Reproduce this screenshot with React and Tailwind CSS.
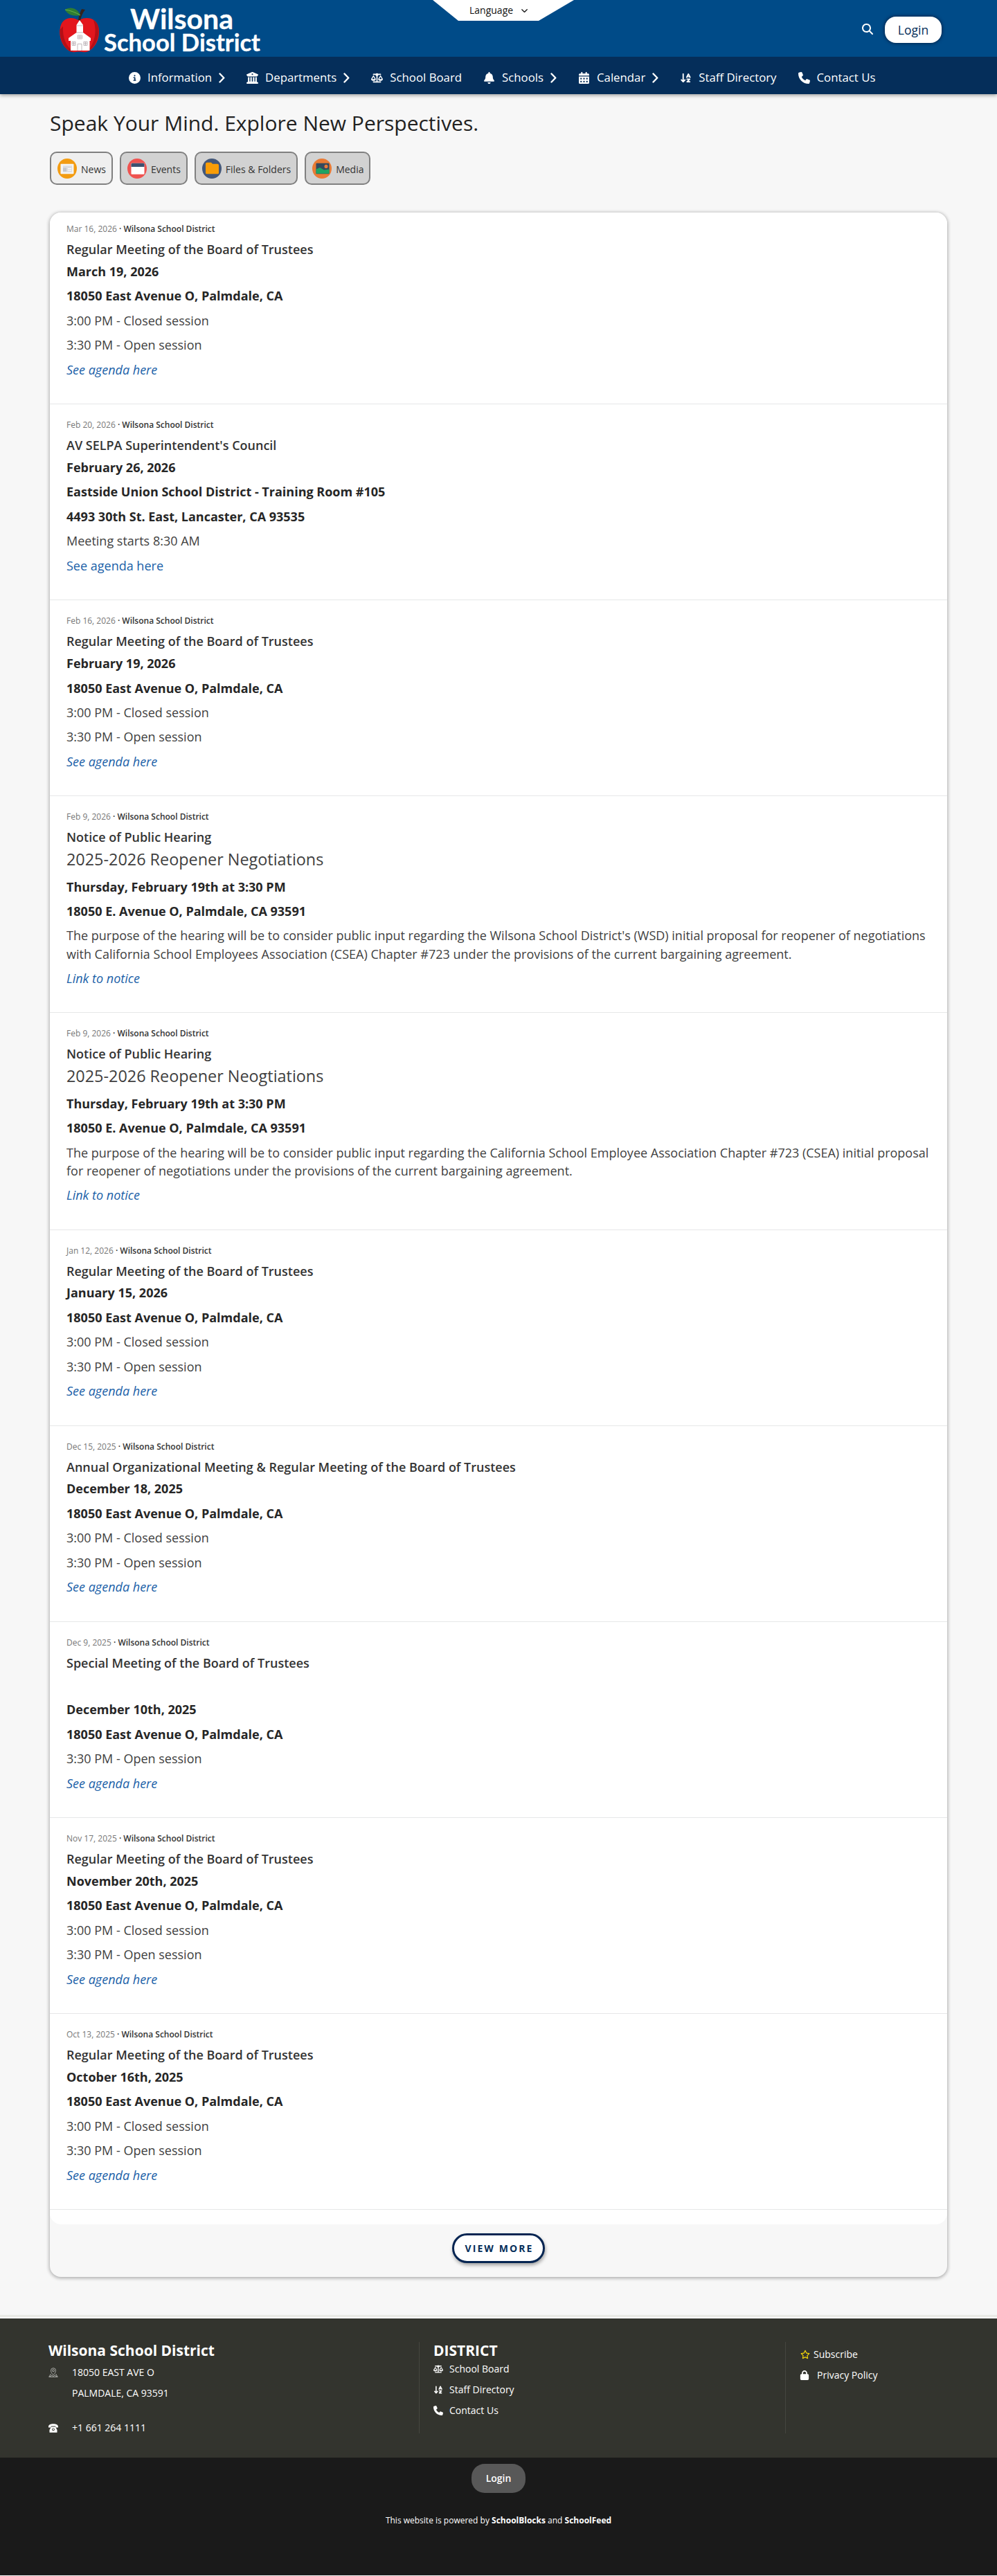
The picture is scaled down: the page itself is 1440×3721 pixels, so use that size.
import React from 'react';
import {
  FaArrowDownAZ,
  FaBell,
  FaBuildingColumns,
  FaCalendarDays,
  FaChevronDown,
  FaCircleInfo,
  FaLock,
  FaMagnifyingGlass,
  FaPhone,
  FaRegStar,
  FaScaleBalanced,
} from 'react-icons/fa6';

const navItems = [
  { label: 'Information', icon: FaCircleInfo, menu: true },
  { label: 'Departments', icon: FaBuildingColumns, menu: true },
  { label: 'School Board', icon: FaScaleBalanced },
  { label: 'Schools', icon: FaBell, menu: true },
  { label: 'Calendar', icon: FaCalendarDays, menu: true },
  { label: 'Staff Directory', icon: FaArrowDownAZ },
  { label: 'Contact Us', icon: FaPhone },
];

const address = { text: '18050 East Avenue O, Palmdale, CA', bold: true };
const closed = { text: '3:00 PM - Closed session' };
const open = { text: '3:30 PM - Open session' };
const agenda = { text: 'See agenda here', link: true, italic: true };

const posts = [
  {
    date: 'Mar 16, 2026',
    title: 'Regular Meeting of the Board of Trustees',
    lines: [{ text: 'March 19, 2026', bold: true }, address, closed, open, agenda],
  },
  {
    date: 'Feb 20, 2026',
    title: "AV SELPA Superintendent's Council",
    lines: [
      { text: 'February 26, 2026', bold: true },
      { text: 'Eastside Union School District - Training Room #105', bold: true },
      { text: '4493 30th St. East, Lancaster, CA 93535', bold: true },
      { text: 'Meeting starts 8:30 AM' },
      { text: 'See agenda here', link: true },
    ],
  },
  {
    date: 'Feb 16, 2026',
    title: 'Regular Meeting of the Board of Trustees',
    lines: [{ text: 'February 19, 2026', bold: true }, address, closed, open, agenda],
  },
  {
    date: 'Feb 9, 2026',
    title: 'Notice of Public Hearing',
    heading: '2025-2026 Reopener Negotiations',
    lines: [
      { text: 'Thursday, February 19th at 3:30 PM', bold: true },
      { text: '18050 E. Avenue O, Palmdale, CA 93591', bold: true },
      {
        text: "The purpose of the hearing will be to consider public input regarding the Wilsona School District's (WSD) initial proposal for reopener of negotiations with California School Employees Association (CSEA) Chapter #723 under the provisions of the current bargaining agreement.",
      },
      { text: 'Link to notice', link: true, italic: true },
    ],
  },
  {
    date: 'Feb 9, 2026',
    title: 'Notice of Public Hearing',
    heading: '2025-2026 Reopener Neogtiations',
    lines: [
      { text: 'Thursday, February 19th at 3:30 PM', bold: true },
      { text: '18050 E. Avenue O, Palmdale, CA 93591', bold: true },
      {
        text: 'The purpose of the hearing will be to consider public input regarding the California School Employee Association Chapter #723 (CSEA) initial proposal for reopener of negotiations under the provisions of the current bargaining agreement.',
      },
      { text: 'Link to notice', link: true, italic: true },
    ],
  },
  {
    date: 'Jan 12, 2026',
    title: 'Regular Meeting of the Board of Trustees',
    lines: [{ text: 'January 15, 2026', bold: true }, address, closed, open, agenda],
  },
  {
    date: 'Dec 15, 2025',
    title: 'Annual Organizational Meeting & Regular Meeting of the Board of Trustees',
    lines: [{ text: 'December 18, 2025', bold: true }, address, closed, open, agenda],
  },
  {
    date: 'Dec 9, 2025',
    title: 'Special Meeting of the Board of Trustees',
    lines: [{ text: '\u00a0' }, { text: 'December 10th, 2025', bold: true }, address, open, agenda],
  },
  {
    date: 'Nov 17, 2025',
    title: 'Regular Meeting of the Board of Trustees',
    lines: [{ text: 'November 20th, 2025', bold: true }, address, closed, open, agenda],
  },
  {
    date: 'Oct 13, 2025',
    title: 'Regular Meeting of the Board of Trustees',
    lines: [{ text: 'October 16th, 2025', bold: true }, address, closed, open, agenda],
  },
];

const Logo = () => (
  <svg width="300" height="75" viewBox="0 0 300 75" className="block overflow-visible">
    {/* apple */}
    <path d="M28 24 C18 18 3 20 1.500 38 C0 54 9 66 17 69.500 C22 71.500 25 69 30 69.500 C35 70 38 71 43 69 C52 64 59 52 58 38 C56 20 40 19 31 23 Z" fill="#e3161d" />
    <path d="M50 24 C57 28 60 38 56 50 C53 60 47 67 42 69 C51 57 56 42 50 24 Z" fill="#b50f16" />
    <path d="M1.500 38 C1 53 9 66 17 69.500 L21 69 C11 63 5 50 6 33 Z" fill="#b50f16" />
    <path d="M28 24 C29 17 31 12 33 8 L38 9 C34 14 32 19 31 25 Z" fill="#35231c" />
    <path d="M9 9 C17 4 27 7 31 17 C22 19 13 17 9 9 Z" fill="#2f7d32" />
    <path d="M9 9 C17 10 24 13 31 17" stroke="#69b34c" strokeWidth="1" fill="none" />
    {/* school house */}
    <path d="M30 24 L35 31 V42 L46 50 V54 H44.500 V68 H17 V54 H14 V50 L25.500 42 V31 Z" fill="#fff" />
    <g fill="none" stroke="#a79ba1" strokeWidth="0.700">
      <path d="M25 32 H35 M25 42 H35" />
      <rect x="27.500" y="46" width="6" height="5" />
      <path d="M27.500 48.500 H33.500 M30.500 46 V51" />
      <rect x="19" y="55.500" width="5" height="5" />
      <path d="M19 58 H24 M21.500 55.500 V60.500" />
      <rect x="36" y="55.500" width="5" height="5" />
      <path d="M36 58 H41 M38.500 55.500 V60.500" />
      <path d="M27 68 V58.500 H33 V68" />
    </g>
    <g fill="#fff" stroke="#fff" strokeWidth="0.300" fontFamily="Lato, sans-serif" fontWeight="700">
      <text x="103" y="37" fontSize="41" textLength="149" lengthAdjust="spacingAndGlyphs">Wilsona</text>
      <text x="65" y="68.500" fontSize="34" textLength="226" lengthAdjust="spacingAndGlyphs">School District</text>
    </g>
  </svg>
);

const tabs = [
  {
    label: 'News',
    active: true,
    icon: (
      <>
        <circle cx="14" cy="14" r="14" fill="#f39c12" />
        <rect x="4.500" y="7.500" width="19" height="14" rx="1" fill="#f4f4f4" />
        <rect x="8" y="10" width="13" height="9" fill="#dcdde0" />
        <rect x="8" y="13" width="5" height="5" fill="#c3c6cb" />
        <path d="M15 14 H20 M15 16.500 H20" stroke="#fff" />
      </>
    ),
  },
  {
    label: 'Events',
    icon: (
      <>
        <circle cx="14" cy="14" r="14" fill="#ef5350" />
        <rect x="5.500" y="6.500" width="19" height="15.500" rx="1" fill="#fff" />
        <path d="M5.500 11.500 V8 a1.500 1.500 0 0 1 1.500-1.500 H23 a1.500 1.500 0 0 1 1.500 1.500 V11.500 Z" fill="#3d5170" />
      </>
    ),
  },
  {
    label: 'Files & Folders',
    icon: (
      <>
        <circle cx="14" cy="14" r="14" fill="#44587a" />
        <path d="M5 7.500 a2 2 0 0 1 2-2 H13 L15 7.500 H22 a2 2 0 0 1 2 2 V20 a1.500 1.500 0 0 1-1.500 1.500 H6.500 A1.500 1.500 0 0 1 5 20 Z" fill="#f99d07" />
      </>
    ),
  },
  {
    label: 'Media',
    icon: (
      <>
        <circle cx="14" cy="14" r="14" fill="#e97b35" />
        <rect x="5.500" y="6.500" width="19" height="15" rx="1" fill="#34495e" />
        <circle cx="20" cy="11" r="2.500" fill="#e97b35" />
        <path d="M5.500 15 L11 12.500 L17 16 L24.500 15 V21 H5.500 Z" fill="#1fa463" />
      </>
    ),
  },
];

const NavChevron = () => (
  <svg width="9" height="15" viewBox="0 0 9 15" fill="none" stroke="currentColor" strokeWidth="2.400" className="ml-[10px]">
    <path d="M1.500 1.500 L7.300 7.500 L1.500 13.500" strokeLinecap="round" strokeLinejoin="round" />
  </svg>
);

const PinIcon = () => (
  <svg width="14" height="14" viewBox="0 0 14 14" fill="none" stroke="#a9aaa6" strokeWidth="1">
    <path d="M7 10.500 C4.500 8 3.500 6.500 3.500 4.200 a3.500 3.500 0 0 1 7 0 C10.500 6.500 9.500 8 7 10.500 Z" />
    <circle cx="7" cy="4.300" r="1.500" />
    <path d="M3.500 9 L0.700 13.400 H13.300 L10.500 9" />
    <path d="M2 13 L5 11 L7 12.500 L9 11 L12 13" />
  </svg>
);

const DeskPhoneIcon = () => (
  <svg width="14" height="13" viewBox="0 0 14 13" fill="#fff">
    <path d="M0 4.500 C0 1.500 3 0.200 7 0.200 S14 1.500 14 4.500 V5.400 H10.300 V3.600 H3.700 V5.400 H0 Z" />
    <path fillRule="evenodd" d="M4 4.500 H10 L12.500 9 V12.800 H1.500 V9 Z M7 6.400 a1.900 1.900 0 1 0 0 3.800 a1.900 1.900 0 0 0 0-3.800 Z" />
    <circle cx="7" cy="8.300" r="1" />
  </svg>
);

const Header = () => (
  <header className="relative z-10 shadow-[0_2px_5px_rgba(0,0,0,0.35)]">
    <div className="relative flex h-[82px] items-start justify-between bg-[#004b88] pr-20 pl-[85px]">
      <div className="pt-[5px]">
        <Logo />
      </div>
      <div className="absolute top-0 left-1/2 ml-[-95px] flex h-[30px] w-[204px] items-center bg-white pl-[53px] text-sm text-[#111] [clip-path:polygon(0_0,100%_0,153px_100%,37px_100%)]">
        Language
        <FaChevronDown className="ml-[11px] h-[10px] w-[11px]" />
      </div>
      <div className="flex items-center pt-6">
        <FaMagnifyingGlass className="mr-[17px] mb-0.5 size-4 text-white" />
        <button className="h-[38px] w-[82px] rounded-2xl bg-white text-[17.500px] font-medium text-[#062e59] shadow-[0_0_4px_1px_rgba(3,30,62,0.800)]">
          Login
        </button>
      </div>
    </div>
    <nav className="flex h-[54px] items-center bg-[#052e5a] pt-1.5 pl-[186px] text-[16.800px] text-white">
      {navItems.map(({ label, icon: Icon, menu }) => (
        <a key={label} className="mr-[31px] flex items-center whitespace-nowrap">
          <Icon className="mr-[10px] h-[17px] w-auto" />
          {label}
          {menu && <NavChevron />}
        </a>
      ))}
    </nav>
  </header>
);

const PostLine = ({ line }) => {
  if (line.link) {
    return (
      <p className={`mb-[9.400px] leading-[26.100px] text-[#1a5fa8] ${line.italic ? 'italic' : ''}`}>
        <a>{line.text}</a>
      </p>
    );
  }
  return (
    <p className={`mb-[9.400px] leading-[26.100px] ${line.bold ? 'font-bold text-[#262626]' : 'text-[#3f3f3f]'}`}>
      {line.text}
    </p>
  );
};

const Post = ({ post }) => (
  <article className="border-b border-[#e6e7e8] px-6 pt-[21px] pb-[26.900px] text-lg first:pt-[15px]">
    <div className="text-xs leading-[18px] font-semibold text-[#333]">
      <span className="font-normal text-[#777]">{post.date}</span> · {'Wilsona School District'}
    </div>
    <h3 className="mt-[7px] leading-[26px] font-semibold text-[#333]">{post.title}</h3>
    <div className="mt-[5.800px]">
      {post.heading && (
        <h2 className="mb-[13.300px] text-[23.400px] leading-[26.100px] text-[#3f3f3f]">{post.heading}</h2>
      )}
      {post.lines.map((line, i) => (
        <PostLine key={i} line={line} />
      ))}
    </div>
  </article>
);

const Footer = () => (
  <footer className="text-sm text-white">
    <div className="h-px bg-[#e0e1da]" />
    <div className="h-px bg-[#f7f7f7]" />
    <div className="h-px bg-[#e0e1da]" />
    <div className="h-0.5 bg-white" />
    <div className="flex h-[201px] bg-[#33342e] pt-[34px] pl-[70px]">
      <div className="h-[132px] w-[536px] border-r border-[#45463f]">
        <h4 className="text-[21px] leading-6 font-bold">Wilsona School District</h4>
        <div className="mt-[5px] flex leading-[30px]">
          <span className="flex h-[30px] w-[34px] items-center">
            <PinIcon />
          </span>
          <p>
            18050 EAST AVE O
            <br />
            PALMDALE, CA 93591
          </p>
        </div>
        <div className="mt-5 flex items-center leading-[30px]">
          <span className="w-[34px]">
            <DeskPhoneIcon />
          </span>
          +1 661 264 1111
        </div>
      </div>
      <div className="h-[132px] w-[529px] border-r border-[#45463f] pl-5">
        <h4 className="text-[21px] leading-6 font-bold">DISTRICT</h4>
        <ul className="leading-[30px]">
          <li className="flex items-center">
            <span className="w-[23px]"><FaScaleBalanced className="h-[14px] w-auto" /></span>
            School Board
          </li>
          <li className="flex items-center">
            <span className="w-[23px]"><FaArrowDownAZ className="h-[14px] w-auto" /></span>
            Staff Directory
          </li>
          <li className="flex items-center">
            <span className="w-[23px]"><FaPhone className="h-[14px] w-auto" /></span>
            Contact Us
          </li>
        </ul>
      </div>
      <ul className="pt-[3px] pl-5 leading-[30px]">
        <li className="flex items-center">
          <FaRegStar className="mr-[5px] ml-px h-[14px] w-auto text-[#f5d90a]" />
          Subscribe
        </li>
        <li className="flex items-center">
          <FaLock className="mr-[11px] h-[14px] w-auto" />
          Privacy Policy
        </li>
      </ul>
    </div>
    <div className="flex h-[170px] flex-col items-center bg-[#1a1a1a] pt-[9px] text-xs">
      <button className="h-[42px] w-[78px] rounded-[19px] bg-[#585858] text-sm font-semibold">Login</button>
      <p className="mt-[31px] leading-[18px]">
        This website is powered by <b>SchoolBlocks</b> and <b>SchoolFeed</b>
      </p>
    </div>
  </footer>
);

export default function App() {
  return (
    <div className="h-[3721px] overflow-hidden bg-[#f7f7f7] font-['Open_Sans',sans-serif]">
      <Header />
      <main className="mx-[72px] pt-[22px]">
        <h1 className="text-[30px] leading-10 text-[#222]">Speak Your Mind. Explore New Perspectives.</h1>
        <div className="mt-[21px] flex gap-[10px]">
          {tabs.map((tab) => (
            <button
              key={tab.label}
              className={`flex h-[48px] items-center rounded-[10px] border-2 border-[#808080] pr-2 pl-[9px] text-sm text-[#333] ${
                tab.active ? 'bg-[#efefef]' : 'bg-[#d2d2d2]'
              }`}
            >
              <svg width="28" height="29" viewBox="0 0 28 28" preserveAspectRatio="none" className="mr-1.5">
                {tab.icon}
              </svg>
              <span className="pt-1">{tab.label}</span>
            </button>
          ))}
        </div>
        <section className="mt-10 rounded-2xl bg-[#f7f7f7] pb-5 shadow-[0_1px_5px_1px_rgba(0,0,0,0.300)]">
          <div className="rounded-2xl bg-white pb-[21px]">
            {posts.map((post, i) => (
              <Post key={i} post={post} />
            ))}
          </div>
          <div className="mt-[13px] flex justify-center">
            <button className="h-[43px] w-[134px] rounded-[22px] border-3 border-[#052552] bg-white pl-0.5 text-sm font-bold tracking-[2.100px] whitespace-nowrap text-[#052e5a] shadow-[1px_3px_5px_rgba(0,0,0,0.350)]">
              VIEW MORE
            </button>
          </div>
        </section>
      </main>
      <div className="h-[55px]" />
      <Footer />
    </div>
  );
}
